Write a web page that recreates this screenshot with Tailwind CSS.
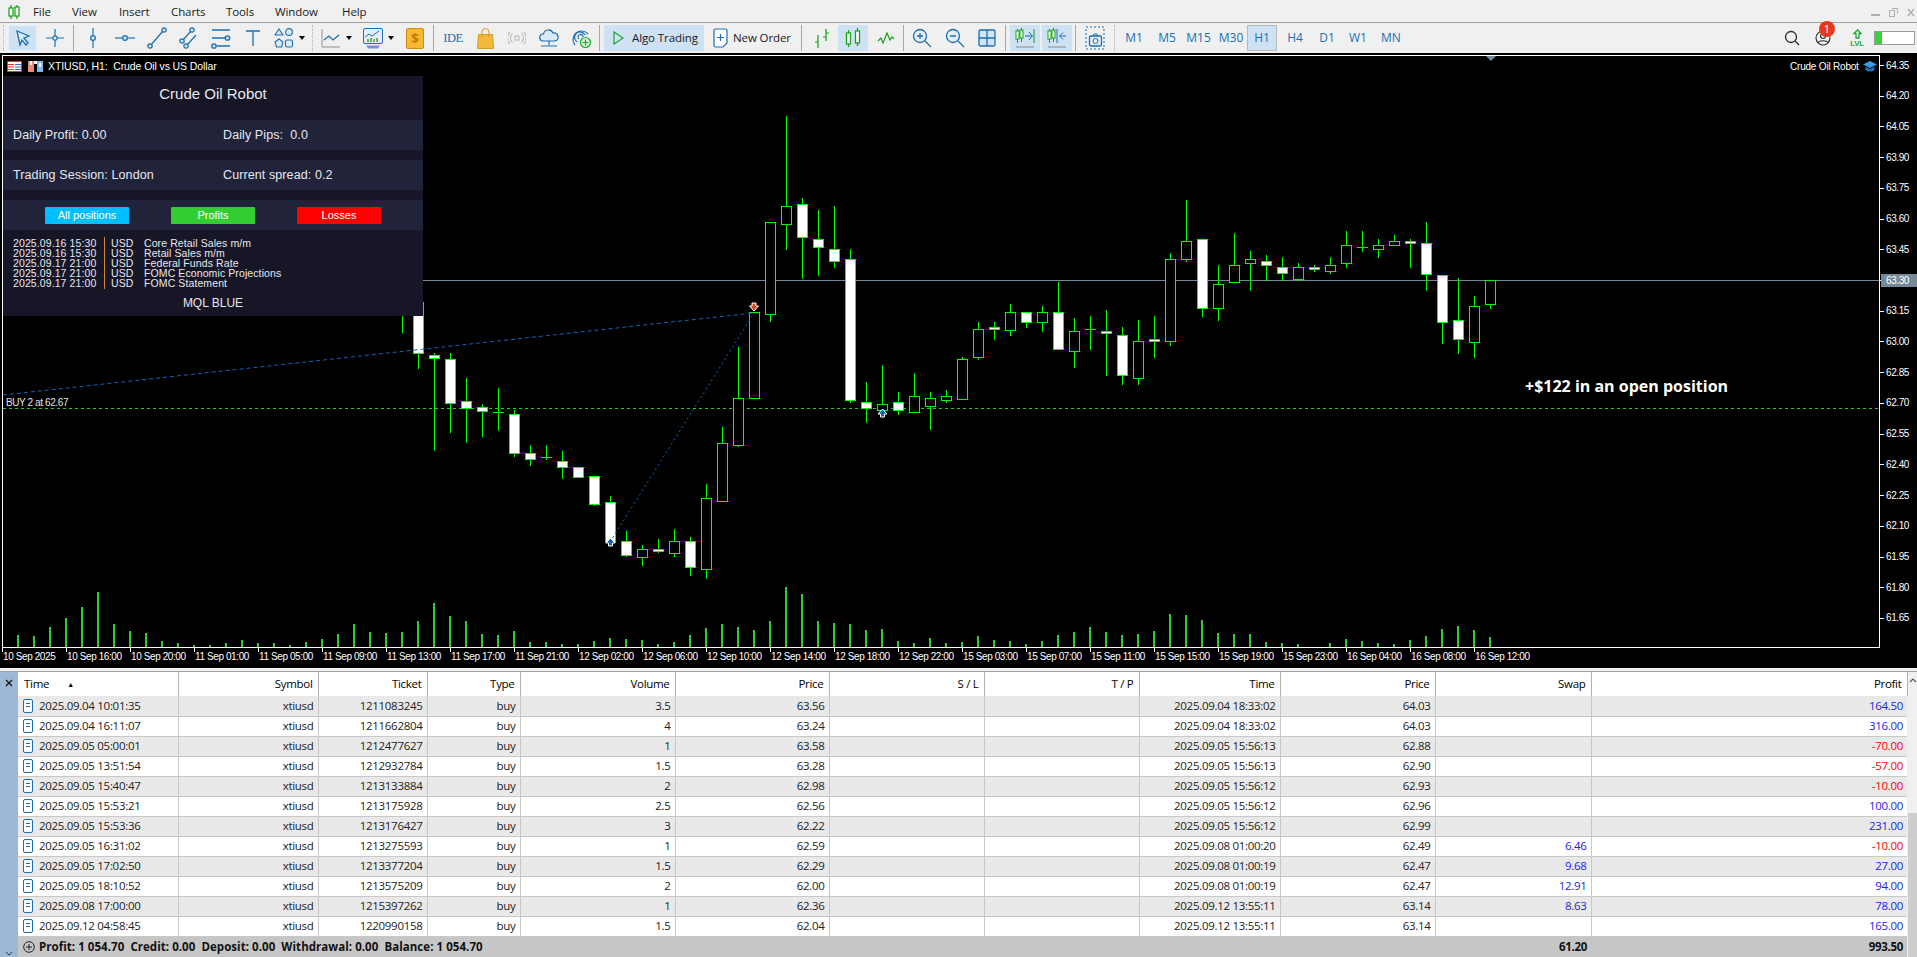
<!DOCTYPE html>
<html lang="en">
<head>
    <meta charset="UTF-8">
    <title>MetaTrader 5 - XTIUSD H1</title>
    <script src="https://cdn.jsdelivr.net/npm/@tailwindcss/browser@4"></script>
</head>
<body class="w-[1917px] h-[957px] overflow-hidden bg-[#f0f0f0] flex flex-col font-['Open_Sans',sans-serif] text-black">

    <!-- menu bar -->
    <div class="h-[23px] flex items-center border-b border-[#a0a0a0] text-[11.500px] tracking-[-0.100px] leading-none text-[#1a1a1a] shrink-0 pt-[2px]">
        <svg class="ml-[7px] w-[14px] h-[16px]" viewBox="0 0 14 16" fill="none" stroke="#12a012" stroke-width="1.2"><path d="M4 1v14M10 1v14"/><rect x="2" y="4" width="4" height="8" fill="#fff"/><rect x="8" y="3" width="4" height="9" fill="#fff"/></svg>
        <span class="ml-[12px] w-[39px]">File</span>
        <span class="w-[47px]">View</span>
        <span class="w-[52px]">Insert</span>
        <span class="w-[55px]">Charts</span>
        <span class="w-[49px]">Tools</span>
        <span class="w-[67px]">Window</span>
        <span>Help</span>
        <div class="ml-auto flex items-center gap-[9px] pr-[2px] text-[#a8a8a8]">
            <svg class="w-[9px] h-[10px]" viewBox="0 0 9 10"><rect y="7" width="9" height="2" fill="#b0b0b0"/></svg>
            <svg class="w-[9px] h-[10px]" viewBox="0 0 9 10" fill="none" stroke="#b0b0b0"><rect x="0.5" y="3.5" width="5" height="6"/><path d="M3 1.5h5.5v5"/></svg>
            <svg class="w-[8px] h-[10px]" viewBox="0 0 8 10" stroke="#b0b0b0" stroke-width="1.4"><path d="M1 2l6 7M7 2l-6 7"/></svg>
        </div>
    </div>

    <!-- toolbar -->
    <div class="h-[30px] flex items-center shrink-0 text-[#1a6fb5]">
        <div class="w-[8px] h-[26px] border-l border-dotted border-[#b0b0b0] ml-[3px] -mr-[3px]"></div>
        <div class="w-[29px] h-[26px] bg-[#cfe2f3] flex items-center justify-center border border-[#e8f1f9]"><svg class="w-[20px] h-[20px]" viewBox="0 0 20 20" fill="#dceaf6" stroke="#1a6fb5" stroke-width="1.3"><path d="M4 3l12 5-5 2 4 5-2 2-4-5-2 5z"/></svg></div>
        <div class="ml-[2px] w-[32px] flex justify-center"><svg class="w-[20px] h-[20px]" viewBox="0 0 20 20" fill="none" stroke="#1a6fb5" stroke-width="1.2"><path d="M10 1v18M1 10h18"/><circle cx="10" cy="10" r="2.2" fill="#f0f0f0"/></svg></div>
        <div class="ml-[2px] w-[1px] h-[26px] bg-[#a8a8a8]"></div>

        <div class="ml-[3px] w-[32px] flex justify-center"><svg class="w-[20px] h-[24px]" viewBox="0 0 20 24" fill="none" stroke="#1a6fb5" stroke-width="1.2"><path d="M10 2v20"/><circle cx="10" cy="12" r="2.4" fill="#cfe2f3"/></svg></div>
        <div class="w-[32px] flex justify-center"><svg class="w-[22px] h-[20px]" viewBox="0 0 22 20" fill="none" stroke="#1a6fb5" stroke-width="1.2"><path d="M1 10h20"/><circle cx="11" cy="10" r="2.4" fill="#cfe2f3"/></svg></div>
        <div class="w-[32px] flex justify-center"><svg class="w-[22px] h-[24px]" viewBox="0 0 22 24" fill="none" stroke="#1a6fb5" stroke-width="1.2"><path d="M5 19L17 5"/><circle cx="4" cy="20" r="2.2" fill="#cfe2f3"/><circle cx="18" cy="4" r="2.2" fill="#cfe2f3"/></svg></div>
        <div class="w-[32px] flex justify-center"><svg class="w-[22px] h-[24px]" viewBox="0 0 22 24" fill="none" stroke="#1a6fb5" stroke-width="1.2"><path d="M5 14l8-9M9 19l9-10"/><circle cx="4" cy="15" r="2.2" fill="#cfe2f3"/><circle cx="14" cy="4" r="2.2" fill="#cfe2f3"/><circle cx="8" cy="20" r="2.2" fill="#cfe2f3"/></svg></div>
        <div class="w-[32px] flex justify-center"><svg class="w-[22px] h-[24px]" viewBox="0 0 22 24" fill="none" stroke="#1a6fb5" stroke-width="1.3"><path d="M2 4h18M2 12h13M7 20h13"/><circle cx="17.5" cy="12" r="2.2" fill="#cfe2f3"/><circle cx="4" cy="20" r="2.2" fill="#cfe2f3"/></svg></div>
        <div class="w-[32px] flex justify-center"><svg class="w-[16px] h-[20px]" viewBox="0 0 16 20" fill="none" stroke="#1a6fb5" stroke-width="1.3"><path d="M1 3h14M8 3v15"/></svg></div>
        <div class="w-[30px] flex justify-center"><svg class="w-[20px] h-[22px]" viewBox="0 0 20 22" fill="#dceaf6" stroke="#1a6fb5" stroke-width="1.1"><path d="M5 2l4 6H1z"/><circle cx="15" cy="5" r="3.4"/><path d="M5 12l4 3-1.5 5h-5L1 15z"/><rect x="11.5" y="13" width="7" height="7" rx="1.5"/></svg></div>
        <div class="w-[6px] h-0 border-x-[3px] border-t-[4px] border-x-transparent border-t-black"></div>

        <div class="ml-[7px] w-[1px] h-[26px] border-l border-dotted border-[#b0b0b0]"></div>
        <div class="ml-[6px] w-[24px] flex justify-center"><svg class="w-[20px] h-[20px]" viewBox="0 0 20 20" fill="none"><path d="M1 1v18h18" stroke="#909090"/><path d="M3 12l5-4 4 4 6-5" stroke="#1a6fb5" stroke-width="1.2"/></svg></div>
        <div class="w-[12px] flex justify-center"><div class="w-0 h-0 border-x-[3.5px] border-t-[4px] border-x-transparent border-t-black"></div></div>
        <div class="ml-[6px] w-[24px] flex justify-center"><svg class="w-[22px] h-[23px]" viewBox="0 0 22 23" fill="none"><rect x="1.5" y="1.5" width="19" height="15" rx="1.5" fill="#e6eef6" stroke="#1a6fb5"/><path d="M3 10l4-3 3 2 7-5" stroke="#1a6fb5"/><path d="M6 15v-3M9 15v-4M12 15v-3M15 15v-4" stroke="#2aa52a" stroke-width="1.4"/><path d="M4 18.5h14l-2 3H6z" fill="#6a9bc5"/></svg></div>
        <div class="w-[12px] flex justify-center"><div class="w-0 h-0 border-x-[3.5px] border-t-[4px] border-x-transparent border-t-black"></div></div>
        <div class="ml-[6px] w-[24px] flex justify-center"><div class="w-[18px] h-[21px] rounded-[2px] bg-[#f5b82e] border border-[#c98d10] text-[#b77c0c] text-[13px] leading-[19px] font-bold text-center">$</div></div>
        <div class="ml-[6px] w-[1px] h-[26px] bg-[#a8a8a8]"></div>

        <div class="ml-[3px] w-[32px] text-center text-[12.500px] tracking-[-0.500px] text-[#1a6fb5] font-['Liberation_Serif',serif]">IDE</div>
        <div class="w-[32px] flex justify-center"><svg class="w-[17px] h-[21px]" viewBox="0 0 17 21" fill="#f2b93b" stroke="#d19a20"><path d="M1.5 6.5h14l1 14H.5z"/><path d="M5 9V4a3.5 3.5 0 0 1 7 0v5" fill="none"/></svg></div>
        <div class="w-[32px] flex justify-center"><svg class="w-[18px] h-[14px]" viewBox="0 0 18 14" fill="none" stroke="#c2c2c2" stroke-width="1.2"><rect x="7" y="5" width="4" height="4"/><path d="M4.5 2.5a6 6 0 0 0 0 9M13.5 2.5a6 6 0 0 1 0 9M2 1a9 9 0 0 0 0 12M16 1a9 9 0 0 1 0 12"/></svg></div>
        <div class="w-[32px] flex justify-center"><svg class="w-[20px] h-[20px]" viewBox="0 0 20 20" fill="#dceaf6" stroke="#1a6fb5" stroke-width="1.2"><path d="M4 13a3.5 3.5 0 0 1 .5-7A5 5 0 0 1 14 5a4 4 0 0 1 2 8z"/><path d="M10 13v4M2 18h16" fill="none"/></svg></div>
        <div class="w-[32px] flex justify-center"><svg class="w-[22px] h-[22px]" viewBox="0 0 22 22" fill="none" stroke="#1a6fb5" stroke-width="1.2"><path d="M5 18A8.5 8.5 0 1 1 18 7M7 15a5.5 5.5 0 1 1 8-7M9 12a2.5 2.5 0 1 1 4-2"/><circle cx="15.5" cy="15.5" r="5" fill="#d8f2d8" stroke="#1fa83a"/><path d="M15.5 12.5v6M12.5 15.5h6" stroke="#1fa83a"/></svg></div>
        <div class="ml-[2px] w-[1px] h-[26px] bg-[#a8a8a8]"></div>

        <div class="ml-[4px] w-[100px] h-[26px] bg-[#cfe2f3] flex items-center gap-[8px] pl-[9px] text-[11.500px] tracking-[-0.100px] text-[#1a1a1a]"><svg class="w-[11px] h-[14px] shrink-0" viewBox="0 0 11 14" fill="none" stroke="#1fa83a" stroke-width="1.2"><path d="M1 1l9 6-9 6z"/></svg><span class="whitespace-nowrap">Algo Trading</span></div>
        <div class="ml-[6px] w-[90px] flex items-center gap-[5px] pl-[3px] text-[11.500px] tracking-[-0.100px] text-[#1a1a1a]"><svg class="w-[15px] h-[20px] shrink-0" viewBox="0 0 15 20" fill="#fff" stroke="#1a6fb5" stroke-width="1.2"><path d="M2.5 1h10a1.5 1.5 0 0 1 1.500 1.500V15l-4 4H2.500A1.500 1.500 0 0 1 1 17.500v-15A1.500 1.500 0 0 1 2.500 1z"/><path d="M7.500 6v7M4 9.500h7" fill="none"/></svg><span class="whitespace-nowrap">New Order</span></div>
        <div class="ml-[1px] w-[1px] h-[26px] bg-[#a8a8a8]"></div>

        <div class="ml-[4px] w-[32px] flex justify-center"><svg class="w-[18px] h-[20px]" viewBox="0 0 18 20" fill="none" stroke="#12a012" stroke-width="1.2"><path d="M5 7v13M2 14h3M13 1v12M13 5h3M10 9h3"/></svg></div>
        <div class="w-[30px] h-[26px] bg-[#cfe2f3] flex items-center justify-center"><svg class="w-[16px] h-[22px]" viewBox="0 0 16 22" fill="none" stroke="#12a012" stroke-width="1.200"><path d="M3.500 3v17M12.500 1v18"/><rect x="1.500" y="6" width="4" height="11" fill="#fff"/><rect x="10.500" y="4" width="4" height="12" fill="#fff"/></svg></div>
        <div class="w-[35px] flex justify-center"><svg class="w-[18px] h-[14px]" viewBox="0 0 18 14" fill="none" stroke="#12a012" stroke-width="1.200"><path d="M1 10l3-3 2 5 4-10 3 7 2-3 2 2"/></svg></div>
        <div class="w-[1px] h-[26px] bg-[#a8a8a8]"></div>

        <div class="ml-[2px] w-[32px] flex justify-center"><svg class="w-[20px] h-[20px]" viewBox="0 0 20 20" fill="#e6eff8" stroke="#1a6fb5" stroke-width="1.300"><circle cx="8" cy="8" r="6.500"/><path d="M5 8h6M8 5v6M13 13l6 6" fill="none"/></svg></div>
        <div class="w-[34px] flex justify-center"><svg class="w-[20px] h-[20px]" viewBox="0 0 20 20" fill="#e6eff8" stroke="#1a6fb5" stroke-width="1.300"><circle cx="8" cy="8" r="6.500"/><path d="M5 8h6M13 13l6 6" fill="none"/></svg></div>
        <div class="w-[30px] flex justify-center"><svg class="w-[18px] h-[18px]" viewBox="0 0 18 18" fill="#d3e5f5" stroke="#1a6fb5" stroke-width="1.300"><rect x="1" y="1" width="16" height="16" rx="1.500"/><path d="M9 1v16M1 9h16" fill="none"/></svg></div>
        <div class="ml-[3px] w-[1px] h-[26px] bg-[#a8a8a8]"></div>

        <div class="ml-[4px] w-[30px] h-[26px] bg-[#cfe2f3] flex items-center justify-center"><svg class="w-[20px] h-[22px]" viewBox="0 0 20 22" fill="none" stroke="#12a012"><path d="M2.500 2v14M6.500 1v14"/><rect x="1" y="4" width="3" height="8" fill="#fff"/><rect x="5" y="3" width="3" height="8" fill="#fff"/><path d="M10 9h7M14 5l3.500 4-3.500 4" stroke="#1a6fb5"/><path d="M19 2v14" stroke="#12a012"/><path d="M1 20h18" stroke="#8a8a8a"/></svg></div>
        <div class="ml-[2px] w-[30px] h-[26px] bg-[#cfe2f3] flex items-center justify-center"><svg class="w-[20px] h-[22px]" viewBox="0 0 20 22" fill="none" stroke="#12a012"><path d="M2.500 2v14M6.500 1v14"/><rect x="1" y="4" width="3" height="8" fill="#fff"/><rect x="5" y="3" width="3" height="8" fill="#fff"/><path d="M10 2v14" stroke="#1a6fb5"/><path d="M19 9h-6M16 5.500L12.500 9l3.500 3.500" stroke="#1a6fb5"/><path d="M1 20h18" stroke="#8a8a8a"/></svg></div>
        <div class="ml-[3px] w-[1px] h-[26px] bg-[#a8a8a8]"></div>

        <div class="ml-[4px] w-[30px] flex justify-center"><svg class="w-[20px] h-[24px]" viewBox="0 0 20 24" fill="none" stroke="#1a6fb5"><rect x="1" y="1" width="18" height="22" stroke-dasharray="2 2"/><rect x="4.500" y="10" width="12" height="10" rx="1.500" fill="#e6eff8" stroke-width="1.300"/><path d="M8 10l1-2h3l1 2"/><circle cx="10.500" cy="15" r="2.500"/></svg></div>
        <div class="ml-[4px] w-[1px] h-[26px] border-l border-dotted border-[#b0b0b0]"></div>

        <div class="ml-[3px] w-[32px] text-center text-[12px]">M1</div>
        <div class="ml-[1px] w-[32px] text-center text-[12px]">M5</div>
        <div class="w-[31px] text-center text-[12px]">M15</div>
        <div class="ml-[1px] w-[32px] text-center text-[12px]">M30</div>
        <div class="w-[30px] h-[26px] bg-[#cfe2f3] border border-[#b8b8b8] text-center text-[12px] leading-[24px]">H1</div>
        <div class="w-[36px] text-center text-[12px]">H4</div>
        <div class="w-[28px] text-center text-[12px]">D1</div>
        <div class="w-[34px] text-center text-[12px]">W1</div>
        <div class="w-[32px] text-center text-[12px]">MN</div>

        <div class="ml-auto flex items-center pr-[2px]">
            <svg class="w-[16px] h-[16px]" viewBox="0 0 16 16" fill="none" stroke="#2a2a2a" stroke-width="1.300"><circle cx="7" cy="7" r="5.500"/><path d="M11 11l4 4"/></svg>
            <div class="relative ml-[15px] w-[16px] h-[16px]">
                <svg class="w-[16px] h-[16px]" viewBox="0 0 16 16" fill="none" stroke="#2a2a2a" stroke-width="1.100"><circle cx="8" cy="8" r="7"/><circle cx="8" cy="6" r="2.500"/><path d="M3 13c1-3 9-3 10 0"/></svg>
                <div class="absolute -top-[9px] left-[4px] w-[16px] h-[16px] rounded-full bg-[#e5381e] text-white text-[11px] leading-[16px] text-center">1</div>
            </div>
            <div class="ml-[19px] w-[14px] flex flex-col items-center text-[#1fa83a]">
                <svg class="w-[9px] h-[10px]" viewBox="0 0 9 10" fill="none" stroke="#1fa83a" stroke-width="1.300"><path d="M4.500 1L1 4.500h2V9h3V4.500h2z"/></svg>
                <span class="text-[8px] leading-[9px] font-semibold tracking-[-0.3px] font-['Liberation_Sans',sans-serif]">LVL</span>
            </div>
            <div class="ml-[10px] w-[41px] h-[14px] bg-white border border-[#9a9a9a] flex"><div class="w-[7px] bg-[#3ad13a]"></div></div>
        </div>
    </div>

    <!-- chart -->
    <div class="relative h-[615px] bg-black shrink-0 flex flex-col text-white font-['Liberation_Sans',sans-serif] text-[10px] tracking-[-0.4px] overflow-hidden">
        <svg id="chart" class="absolute left-0 top-0" width="1917" height="615" viewBox="0 53 1917 615" shape-rendering="crispEdges"></svg>

        <!-- chart title -->
        <div class="absolute left-[7px] top-[6px] flex items-center">
            <svg class="w-[15px] h-[11px]" viewBox="0 0 15 11" fill="#fff" stroke="#d8392b"><rect x="0.500" y="0.500" width="14" height="10"/><path d="M1 3.500h6M1 6h6M1 8.500h6" /><path d="M8 3.500h6M8 6h6M8 8.500h6" stroke="#2c6eb5"/></svg>
            <svg class="ml-[6px] w-[15px] h-[11px]" viewBox="0 0 15 11" shape-rendering="crispEdges"><rect width="6" height="11" fill="#f28a7c"/><rect x="2" y="0" width="2" height="4" fill="#fff"/><rect x="9" width="6" height="11" fill="#7cb7e8"/><rect x="6" y="0" width="3" height="3" fill="#fff"/><rect x="11" y="2" width="2" height="4" fill="#fff"/></svg>
            <span class="ml-[5px] whitespace-pre text-[10.500px] tracking-[-0.100px]">XTIUSD, H1:  Crude Oil vs US Dollar</span>
        </div>
        <div class="absolute left-[1790px] top-[6px] flex items-center">
            <span class="whitespace-nowrap text-[10px] tracking-[-0.200px] w-[68px]">Crude Oil Robot</span>
            <svg class="ml-[4px] w-[16px] h-[13px]" viewBox="0 0 16 13"><path d="M8 1L1 4.500 8 8l7-3.500z" fill="#3b9be0"/><path d="M3.500 6.500V10c2 2 7 2 9 0V6.500L8 9z" fill="#1f6fb5"/></svg>
        </div>

        <!-- robot panel -->
        <div class="absolute left-[3px] top-[23px] w-[420px] h-[240px] bg-[#161627] text-[#e8e8ee] tracking-normal text-[12.500px] flex flex-col">
            <div class="h-[44px] pb-[7px] flex items-center justify-center text-[15px]">Crude Oil Robot</div>
            <div class="h-[30px] bg-[#20233a] grid grid-cols-[210px_1fr] items-center pl-[10px]"><span class="tracking-[0.100px]">Daily Profit: 0.00</span><span class="whitespace-pre tracking-[0.100px]">Daily Pips:  0.0</span></div>
            <div class="h-[30px] mt-[10px] bg-[#20233a] grid grid-cols-[210px_1fr] items-center pl-[10px]"><span class="tracking-[0.100px]">Trading Session: London</span><span class="tracking-[0.100px]">Current spread: 0.2</span></div>
            <div class="h-[30px] mt-[10px] bg-[#20233a] flex items-center pl-[42px] gap-[42px] text-[11px] text-white">
                <div class="w-[84px] h-[17px] bg-[#00bfff] rounded-[1px] text-center leading-[16px]">All positions</div>
                <div class="w-[84px] h-[17px] bg-[#32cd32] rounded-[1px] text-center leading-[16px]">Profits</div>
                <div class="w-[84px] h-[17px] bg-[#ff0000] rounded-[1px] text-center leading-[16px]">Losses</div>
            </div>
            <div class="mt-[8px] pl-[10px] grid grid-cols-[91px_40px_1fr] text-[10.500px] leading-[10px] tracking-[0.100px] relative">
                <div>2025.09.16 15:30<br>2025.09.16 15:30<br>2025.09.17 21:00<br>2025.09.17 21:00<br>2025.09.17 21:00</div>
                <div class="border-l border-[#cd853f] pl-[6px] -my-px py-px">USD<br>USD<br>USD<br>USD<br>USD</div>
                <div>Core Retail Sales m/m<br>Retail Sales m/m<br>Federal Funds Rate<br>FOMC Economic Projections<br>FOMC Statement</div>
            </div>
            <div class="mt-auto mb-[4px] text-center text-[12px]">MQL BLUE</div>
        </div>

        <!-- BUY label -->
        <div class="absolute left-[6px] top-[342px] text-[#e0e0e0] whitespace-nowrap">BUY 2 at 62.67</div>
        <!-- note -->
        <div class="absolute left-[1525px] top-[321px] text-[16px] tracking-normal font-bold font-['Open_Sans',sans-serif] whitespace-nowrap">+$122 in an open position</div>

        <!-- price axis -->
        <div id="prices" class="absolute left-[1881px] top-[-3.360px] w-[36px] flex flex-col"></div>
        <!-- time axis -->
        <div id="times" class="mt-auto h-[21px] pl-[2px] flex items-start pt-[3px] pb-0"></div>
    </div>

    <div class="h-[3px] shrink-0"></div>

    <!-- trade history -->
    <div class="relative flex-1 flex min-h-0 border-t border-[#a0a0a0]">
        <div class="w-[18px] bg-[#9cb8d6] flex flex-col items-center justify-between shrink-0">
            <svg class="mt-[7px] w-[8px] h-[8px]" viewBox="0 0 8 8" stroke="#1a1a1a" stroke-width="1.400"><path d="M1 1l6 6M7 1L1 7"/></svg>
            <svg class="mb-[1px] w-[8px] h-[5px]" viewBox="0 0 8 5" fill="none" stroke="#333"><path d="M1 1l3 3 3-3"/></svg>
        </div>
        <table class="table-fixed w-[1889px] h-[285px] border-collapse text-[11.500px] tracking-[-0.300px] shrink-0">
            <colgroup>
                <col class="w-[160px]"><col class="w-[140px]"><col class="w-[109px]"><col class="w-[93px]">
                <col class="w-[155px]"><col class="w-[154px]"><col class="w-[155px]"><col class="w-[155px]">
                <col class="w-[141px]"><col class="w-[155px]"><col class="w-[156px]"><col class="w-[316px]">
            </colgroup>
            <thead id="head"></thead>
            <tbody id="rows"></tbody>
        </table>
        <div class="w-[10px] bg-[#f0f0f0] flex flex-col items-center shrink-0">
            <svg class="mt-[6px] w-[8px] h-[5px]" viewBox="0 0 8 5" fill="none" stroke="#555" stroke-width="1.200"><path d="M1 4l3-3 3 3"/></svg>
            <div class="mt-auto w-full h-[144px] bg-[#cdcdcd]"></div>
        </div>
    </div>

    <script>
        // [wickTop, wickBottom, bodyTop, bodyBottom, bearish] in page pixels, bars from index 25
        const ZOOM_A = [
            [107,606,808,606,760,1],[152,760,1055,766,773,1],[197,760,1000,778,908,1],[242,835,1030,902,925,1],
            [287,912,1012,920,932,1],[331,865,995,937,937,0],[376,930,1072,943,1060,1],[421,1035,1097,1060,1078,1],
            [466,1035,1080,1072,1072,0],[511,1053,1136,1084,1102,1],[555,1102,1136,1102,1130,1],[600,1129,1220,1129,1213,1],
            [645,1188,1330,1207,1325,1],[690,1293,1372,1324,1366,1],[735,1335,1397,1348,1372,0],[779,1317,1360,1348,1354,1],
            [824,1287,1372,1324,1360,0],[869,1312,1430,1324,1402,1],[914,1152,1436,1195,1408,0],[959,980,1202,1030,1202,0],
            [1003,742,1042,895,1036,0],[1048,637,895,637,895,0],[1093,367,668,367,643,0],[1138,48,449,319,373,0],
            [1183,294,536,313,412,1],[1227,330,527,418,442,1],[1272,318,503,448,484,1],[1317,447,908,478,901,1],
            [1362,846,968,907,925,1],[1407,795,932,913,931,0],[1451,876,944,907,931,1],[1496,819,938,889,937,0],
            [1541,876,989,895,919,0]
        ].map(c => [100 + c[1] / 3, 100 + c[2] / 3, 100 + c[3] / 3, 100 + c[4] / 3, c[5]]);
        const ZOOM_B = [
            [630,668,649,661,0],[532,656,538,656,0],[426,540,448,532,0],[426,480,442,448,1],[372,468,397,449,0],
            [397,444,397,427,1],[378,456,397,427,0],[306,509,397,508,1],[414,564,454,514,0],[408,510,448,448,0],
            [390,588,454,460,1],[441,615,466,586,1],[420,615,484,595,0],[408,534,478,484,1],[219,498,238,484,0],
            [60,246,184,238,0],[178,411,178,385,1],[255,423,313,385,0],[159,308,256,307,0],[213,333,238,250,0],
            [225,302,244,256,1],[231,302,262,280,1],[249,302,262,296,0],[255,276,262,268,1],[231,282,256,274,0],
            [153,264,196,250,0],[153,216,202,202,0],[177,234,196,208,0],[165,196,184,196,0],[177,264,184,190,1],
            [126,333,190,281,1],[286,492,286,427,1],[294,522,421,478,1],[348,534,379,485,0],[301,387,301,373,0]
        ].map(c => [180 + c[0] / 3, 180 + c[1] / 3, 180 + c[2] / 3, 180 + c[3] / 3, c[4]]);
        const candles = ZOOM_A.concat(ZOOM_B);

        const volA = [225,228,201,174,141,96,192,213,219,243,249,255,255,249,240,249,249,255,246,237,222,192,216,219,216,183,129,168,183,222,225,213,246,246,252,252,243,234,237,240,252,246,225,204,192,201,210,183].map(v => (262 - v) / 3);
        const volB = [51,72,153,159,162,180,177,213,219,204,219,216,198,210,213,222,213,195,186,171,186,195,192,183,132,135,150,189,192,192,216,219,222,231,219,207,213,219,222,210,198,177,168,180,201].map(v => (231 - v) / 3);
        const volumes = volA.concat(volB);

        let svg = "";
        // chart frame
        svg += `<rect x="2" y="55" width="1878" height="1" fill="#fff"/><rect x="2" y="55" width="1" height="593" fill="#fff"/><rect x="1879" y="55" width="1" height="593" fill="#fff"/><rect x="2" y="647" width="1878" height="1" fill="#fff"/>`;
        svg += `<polygon points="1486,56 1496,56 1491,61" fill="#78889a" shape-rendering="auto"/>`;
        for (let i = 0; i < 19; i++) {
            const y = Math.round(65 + 30.72 * i);
            svg += `<rect x="1880" y="${y}" width="4" height="1" fill="#fff"/>`;
        }
        for (let i = 0; i < 24; i++) {
            svg += `<rect x="${2 + 64 * i}" y="648" width="1" height="4" fill="#fff"/>`;
        }
        // current price and open position lines
        svg += `<rect x="3" y="280" width="1876" height="1" fill="#778899"/>`;
        svg += `<line x1="3" y1="408.500" x2="1879" y2="408.500" stroke="#22cc22" stroke-dasharray="3 3"/>`;

        volumes.forEach((h, i) => {
            if (h > 0) svg += `<rect x="${17 + 16 * i}" y="${Math.round(647 - h)}" width="2" height="${Math.round(h)}" fill="#32cd32"/>`;
        });

        // wick of the bar hidden behind the panel
        svg += `<rect x="402" y="300" width="1" height="33" fill="#00ff00"/>`;
        candles.forEach((c, n) => {
            const x = 18 + 16 * (n + 25);
            const top = Math.round(c[2]), bot = Math.round(c[3]);
            svg += `<rect x="${x}" y="${Math.round(c[0])}" width="1" height="${Math.round(c[1] - c[0])}" fill="#00ff00"/>`;
            if (top === bot) {
                svg += `<rect x="${x - 5}" y="${top}" width="11" height="1" fill="#00ff00"/>`;
            } else {
                svg += `<rect x="${x - 4.500}" y="${top + 0.500}" width="10" height="${bot - top}" fill="${c[4] ? "#fff" : "#000"}" stroke="#00ff00"/>`;
            }
        });

        // closed trades
        svg += `<line x1="3" y1="395" x2="754" y2="313" stroke="#1560bd" stroke-dasharray="4 3" shape-rendering="auto"/>`;
        svg += `<line x1="610" y1="542" x2="754" y2="313" stroke="#1560bd" stroke-dasharray="2 3" shape-rendering="auto"/>`;
        svg += `<path d="M752 303h4v3h2.500l-4.500 5-4.500-5h2.500z" fill="#e0441c" stroke="#fff" shape-rendering="auto"/>`;
        svg += `<path d="M608.500 546h4v-3h2.500l-4.500-5-4.500 5h2.500z" fill="#1560bd" stroke="#fff" shape-rendering="auto"/>`;
        svg += `<path d="M880.500 417h4v-3h2.500l-4.500-5-4.500 5h2.500z" fill="#1560bd" stroke="#fff" shape-rendering="auto"/>`;
        document.getElementById("chart").innerHTML = svg;

        const prices = ["64.35","64.20","64.05","63.90","63.75","63.60","63.45","63.30","63.15","63.00","62.85","62.70","62.55","62.40","62.25","62.10","61.95","61.80","61.65"];
        document.getElementById("prices").innerHTML = prices.map(p =>
            `<div class="h-[30.720px] flex items-center"><span class="${p === "63.30" ? "bg-[#778899] w-[36px] pl-[5px] leading-[13px]" : "pl-[5px]"}">${p}</span></div>`).join("");

        const times = ["10 Sep 2025","10 Sep 16:00","10 Sep 20:00","11 Sep 01:00","11 Sep 05:00","11 Sep 09:00","11 Sep 13:00","11 Sep 17:00","11 Sep 21:00","12 Sep 02:00","12 Sep 06:00","12 Sep 10:00","12 Sep 14:00","12 Sep 18:00","12 Sep 22:00","15 Sep 03:00","15 Sep 07:00","15 Sep 11:00","15 Sep 15:00","15 Sep 19:00","15 Sep 23:00","16 Sep 04:00","16 Sep 08:00","16 Sep 12:00"];
        document.getElementById("times").innerHTML = times.map(t => `<div class="w-[64px] shrink-0 whitespace-nowrap pl-[1px] leading-[14px]">${t}</div>`).join("");

        const headers = ["Time","Symbol","Ticket","Type","Volume","Price","S / L","T / P","Time","Price","Swap","Profit"];
        document.getElementById("head").innerHTML = "<tr class=\"h-[24px] bg-white\">" + headers.map((h, i) =>
            i === 0
                ? `<th class="font-normal text-left pl-[6px] border-r border-[#b0b0b0]">Time<span class="ml-[18px] text-[7px] align-[1px]">&#9650;</span></th>`
                : `<th class="font-normal text-right pr-[5px] border-r border-[#b0b0b0]">${h}</th>`).join("") + "</tr>";

        const trades = [
            ["2025.09.04 10:01:35","1211083245","3.5","63.56","2025.09.04 18:33:02","64.03","","164.50"],
            ["2025.09.04 16:11:07","1211662804","4","63.24","2025.09.04 18:33:02","64.03","","316.00"],
            ["2025.09.05 05:00:01","1212477627","1","63.58","2025.09.05 15:56:13","62.88","","-70.00"],
            ["2025.09.05 13:51:54","1212932784","1.5","63.28","2025.09.05 15:56:13","62.90","","-57.00"],
            ["2025.09.05 15:40:47","1213133884","2","62.98","2025.09.05 15:56:12","62.93","","-10.00"],
            ["2025.09.05 15:53:21","1213175928","2.5","62.56","2025.09.05 15:56:12","62.96","","100.00"],
            ["2025.09.05 15:53:36","1213176427","3","62.22","2025.09.05 15:56:12","62.99","","231.00"],
            ["2025.09.05 16:31:02","1213275593","1","62.59","2025.09.08 01:00:20","62.49","6.46","-10.00"],
            ["2025.09.05 17:02:50","1213377204","1.5","62.29","2025.09.08 01:00:19","62.47","9.68","27.00"],
            ["2025.09.05 18:10:52","1213575209","2","62.00","2025.09.08 01:00:19","62.47","12.91","94.00"],
            ["2025.09.08 17:00:00","1215397262","1","62.36","2025.09.12 13:55:11","63.14","8.63","78.00"],
            ["2025.09.12 04:58:45","1220990158","1.5","62.04","2025.09.12 13:55:11","63.14","","165.00"]
        ];
        const cell = "text-right pr-[4px] border-r border-b border-[#c8c8c8] text-[#222]";
        const docIcon = `<svg class="inline-block w-[10px] h-[14px] mr-[6px] align-[-3px]" viewBox="0 0 10 14" fill="#fff" stroke="#1a6fb5"><rect x="0.500" y="0.500" width="9" height="13" rx="1.500"/><path d="M3 4.500h4M3 7.500h4"/></svg>`;
        document.getElementById("rows").innerHTML = trades.map((t, n) => {
            const profit = t[7].startsWith("-") ? "text-[#ff0000]" : "text-[#2222ee]";
            return `<tr class="h-[20px] ${n % 2 === 0 ? "bg-[#e9e9e9]" : "bg-white"}">
                <td class="text-left pl-[5px] border-r border-b border-[#c8c8c8] text-[#222] whitespace-nowrap">${docIcon}${t[0]}</td>
                <td class="${cell}">xtiusd</td><td class="${cell}">${t[1]}</td><td class="${cell}">buy</td>
                <td class="${cell}">${t[2]}</td><td class="${cell}">${t[3]}</td><td class="${cell}"></td><td class="${cell}"></td>
                <td class="${cell}">${t[4]}</td><td class="${cell}">${t[5]}</td>
                <td class="text-right pr-[4px] border-r border-b border-[#c8c8c8] text-[#2222ee]">${t[6]}</td>
                <td class="text-right pr-[4px] border-b border-[#c8c8c8] ${profit}">${t[7]}</td>
            </tr>`;
        }).join("") + `<tr class="h-[21px] bg-[#c6c6c6] font-bold text-[#111]">
            <td colspan="10" class="text-left pl-[5px] whitespace-nowrap tracking-[0.050px]"><svg class="inline-block w-[12px] h-[12px] mr-[4px] align-[-2px]" viewBox="0 0 12 12" fill="none" stroke="#222"><circle cx="6" cy="6" r="5.300"/><path d="M3 6h6M6 3v6"/></svg>Profit: 1 054.70&nbsp; Credit: 0.00&nbsp; Deposit: 0.00&nbsp; Withdrawal: 0.00&nbsp; Balance: 1 054.70</td>
            <td class="text-right pr-[4px]">61.20</td><td class="text-right pr-[4px]">993.50</td></tr>`;
    </script>
</body>
</html>
